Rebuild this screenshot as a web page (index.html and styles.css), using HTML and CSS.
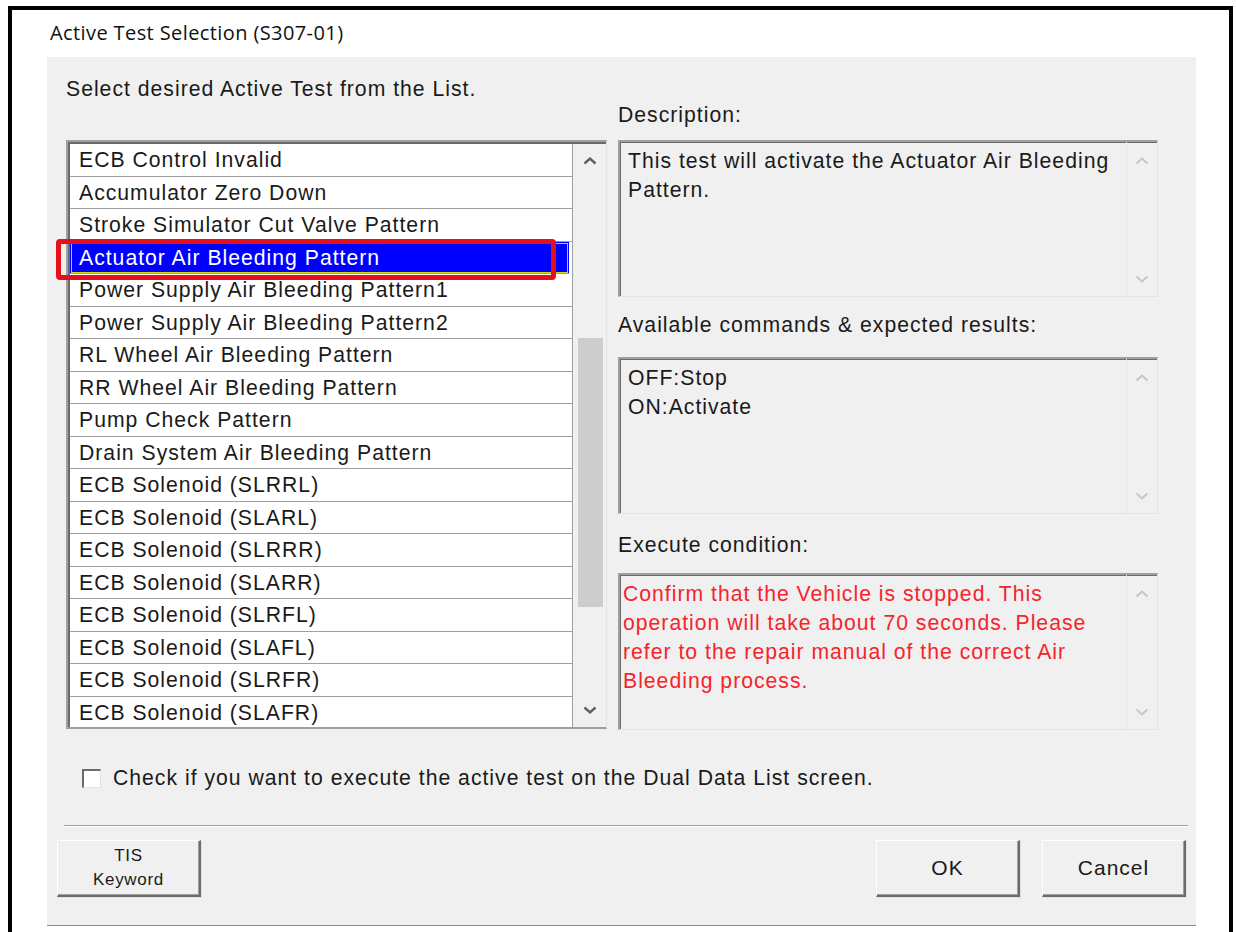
FILE: index.html
```html
<!DOCTYPE html>
<html lang="en">
<head>
<meta charset="utf-8">
<title>Active Test Selection</title>
<link rel="stylesheet" href="styles.css">
</head>
<body>
<div class="frame">
  <div class="title">Active Test Selection (S307-01)</div>
  <div class="panel">
    <div class="main">
      <div class="left">
        <p class="prompt">Select desired Active Test from the List.</p>
        <div class="listbox">
          <div class="rows">
            <div class="row">ECB Control Invalid</div>
            <div class="row">Accumulator Zero Down</div>
            <div class="row">Stroke Simulator Cut Valve Pattern</div>
            <div class="row selected">Actuator Air Bleeding Pattern</div>
            <div class="row">Power Supply Air Bleeding Pattern1</div>
            <div class="row">Power Supply Air Bleeding Pattern2</div>
            <div class="row">RL Wheel Air Bleeding Pattern</div>
            <div class="row">RR Wheel Air Bleeding Pattern</div>
            <div class="row">Pump Check Pattern</div>
            <div class="row">Drain System Air Bleeding Pattern</div>
            <div class="row">ECB Solenoid (SLRRL)</div>
            <div class="row">ECB Solenoid (SLARL)</div>
            <div class="row">ECB Solenoid (SLRRR)</div>
            <div class="row">ECB Solenoid (SLARR)</div>
            <div class="row">ECB Solenoid (SLRFL)</div>
            <div class="row">ECB Solenoid (SLAFL)</div>
            <div class="row">ECB Solenoid (SLRFR)</div>
            <div class="row">ECB Solenoid (SLAFR)</div>
          </div>
          <div class="vscroll">
            <div class="arrow">
              <svg width="14" height="10" viewBox="0 0 14 10"><path d="M1.5 7.5 L7 2.5 L12.5 7.5" fill="none" stroke="#606060" stroke-width="2.4"/></svg>
            </div>
            <div class="track"><div class="thumb"></div></div>
            <div class="arrow">
              <svg width="14" height="10" viewBox="0 0 14 10"><path d="M1.5 2.5 L7 7.5 L12.5 2.5" fill="none" stroke="#606060" stroke-width="2.4"/></svg>
            </div>
          </div>
          <div class="callout"></div>
        </div>
      </div>
      <div class="right">
        <div class="label first">Description:</div>
        <div class="textbox">
          <div class="text">This test will activate the Actuator Air Bleeding Pattern.</div>
          <div class="tscroll">
            <svg width="14" height="10" viewBox="0 0 14 10"><path d="M1.5 7.5 L7 2.5 L12.5 7.5" fill="none" stroke="#c6c6c6" stroke-width="2"/></svg>
            <svg width="14" height="10" viewBox="0 0 14 10"><path d="M1.5 2.5 L7 7.5 L12.5 2.5" fill="none" stroke="#c6c6c6" stroke-width="2"/></svg>
          </div>
        </div>
        <div class="label">Available commands &amp; expected results:</div>
        <div class="textbox">
          <div class="text">OFF:Stop<br>ON:Activate</div>
          <div class="tscroll">
            <svg width="14" height="10" viewBox="0 0 14 10"><path d="M1.5 7.5 L7 2.5 L12.5 7.5" fill="none" stroke="#c6c6c6" stroke-width="2"/></svg>
            <svg width="14" height="10" viewBox="0 0 14 10"><path d="M1.5 2.5 L7 7.5 L12.5 2.5" fill="none" stroke="#c6c6c6" stroke-width="2"/></svg>
          </div>
        </div>
        <div class="label last">Execute condition:</div>
        <div class="textbox">
          <div class="text warn">Confirm that the Vehicle is stopped. This operation will take about 70 seconds. Please refer to the repair manual of the correct Air Bleeding process.</div>
          <div class="tscroll">
            <svg width="14" height="10" viewBox="0 0 14 10"><path d="M1.5 7.5 L7 2.5 L12.5 7.5" fill="none" stroke="#c6c6c6" stroke-width="2"/></svg>
            <svg width="14" height="10" viewBox="0 0 14 10"><path d="M1.5 2.5 L7 7.5 L12.5 2.5" fill="none" stroke="#c6c6c6" stroke-width="2"/></svg>
          </div>
        </div>
      </div>
    </div>
    <label class="check"><span class="box"></span>Check if you want to execute the active test on the Dual Data List screen.</label>
    <div class="sep"></div>
    <div class="buttons">
      <button class="btn tis">TIS<br>Keyword</button>
      <div class="spacer"></div>
      <button class="btn">OK</button>
      <button class="btn">Cancel</button>
    </div>
  </div>
</div>
</body>
</html>
```

FILE: styles.css
```css
html, body {
  margin: 0;
  padding: 0;
  background: #ffffff;
  height: 100%;
  overflow: hidden;
}

body {
  font-family: "Liberation Sans", Arial, sans-serif;
  color: #1a1a1a;
}

.frame {
  margin: 6px 0 0 8px;
  width: 1217px;
  height: 940px;
  border: 4px solid #000;
  border-bottom: none;
  background: #fff;
}

.title {
  font-family: "Open Sans", "Noto Sans", sans-serif;
  font-size: 20px;
  letter-spacing: 0.4px;
  line-height: 24px;
  padding: 11px 0 0 38px;
  height: 36px;
  color: #111;
}

.panel {
  margin-left: 35px;
  width: 1149px;
  height: 868px;
  background: #f0f0f0;
  border-bottom: 1px solid #8a8a8a;
  font-size: 21.2px;
  letter-spacing: 1px;
}

.main {
  display: grid;
  grid-template-columns: 541px 540px;
  column-gap: 11px;
  padding-left: 19px;
}

.prompt {
  margin: 0;
  padding-top: 20px;
  line-height: 24px;
  height: 24px;
  margin-bottom: 39px;
}

/* list of tests */
.listbox {
  position: relative;
  display: flex;
  height: 589px;
  box-sizing: border-box;
  border-top: 2px solid #a0a0a0;
  border-left: 2px solid #a0a0a0;
  border-bottom: 2px solid #a0a0a0;
  border-right: 1px solid #e3e3e3;
  box-shadow: inset 2px 2px 0 #6b6b6b;
  background: #f0f0f0;
}

.rows {
  width: 502px;
  margin: 2px 0 0 2px;
  background: #fff;
  border-right: 1px solid #a0a0a0;
}

.row {
  height: 32.5px;
  line-height: 32px;
  box-sizing: border-box;
  padding-left: 9px;
  border-bottom: 1px solid #a0a0a0;
  white-space: nowrap;
  overflow: hidden;
}

.row.selected {
  background: #0000ff;
  color: #fff;
  outline: 1px solid #d6d600;
  outline-offset: -2px;
  margin-right: 3px;
}

.vscroll {
  width: 33px;
  margin-top: 2px;
  display: flex;
  flex-direction: column;
  background: #f0f0f0;
}

.arrow {
  height: 34px;
  display: flex;
  align-items: center;
  justify-content: center;
}

.track {
  flex: 1;
}

.thumb {
  margin: 160px 3px 0 5px;
  height: 269px;
  background: #cdcdcd;
}

/* red marker drawn around the selected entry */
.callout {
  position: absolute;
  left: -12px;
  top: 97px;
  width: 490px;
  height: 31px;
  border: 5px solid #e4101c;
  border-radius: 4px;
}

/* right column */
.right {
  display: flex;
  flex-direction: column;
}

.label {
  line-height: 24px;
  height: 24px;
  margin-top: 16px;
  margin-bottom: 20px;
}

.label.first {
  margin-top: 46px;
  margin-bottom: 13px;
}

.label.last {
  margin-top: 19px;
  margin-bottom: 16px;
}

.textbox {
  display: flex;
  height: 157px;
  box-sizing: border-box;
  border-top: 2px solid #a0a0a0;
  border-left: 2px solid #a0a0a0;
  border-right: 1px solid #e3e3e3;
  border-bottom: 1px solid #e3e3e3;
  box-shadow: inset 1px 1px 0 #6b6b6b;
}

.text {
  flex: 1;
  padding: 4px 0 0 8px;
  line-height: 29px;
}

.text.warn {
  color: #f5242c;
  padding-left: 3px;
}

.tscroll {
  width: 30px;
  border-left: 1px solid #e6e6e6;
  display: flex;
  flex-direction: column;
  justify-content: space-between;
  align-items: center;
  padding: 14px 0 12px;
}

/* checkbox row */
.check {
  display: flex;
  align-items: center;
  margin: 36px 0 0 35px;
  height: 24px;
  line-height: 24px;
}

.check .box {
  width: 19px;
  height: 19px;
  box-sizing: border-box;
  border-top: 2px solid #6b6b6b;
  border-left: 2px solid #6b6b6b;
  border-right: 1px solid #e3e3e3;
  border-bottom: 1px solid #e3e3e3;
  background: #fff;
  margin-right: 12px;
}

.sep {
  margin: 35px 0 0 17px;
  width: 1124px;
  border-top: 1px solid #a0a0a0;
  border-bottom: 1px solid #fff;
}

.buttons {
  display: flex;
  margin-top: 13px;
  padding: 0 10px;
}

.spacer {
  flex: 1;
}

.btn {
  width: 144px;
  height: 57px;
  font-family: "Liberation Sans", Arial, sans-serif;
  font-size: 21px;
  letter-spacing: 1px;
  color: #1a1a1a;
  background: #f0f0f0;
  border-top: 1px solid #ffffff;
  border-left: 1px solid #ffffff;
  border-right: 2px solid #6b6b6b;
  border-bottom: 2px solid #6b6b6b;
  box-shadow: inset -1px -1px 0 #a0a0a0, 1px 1px 0 #e0e0e0;
  padding: 0;
  margin-left: 22px;
}

.btn.tis {
  font-size: 17px;
  letter-spacing: 0.7px;
  line-height: 24px;
  margin-left: 0;
}
```
